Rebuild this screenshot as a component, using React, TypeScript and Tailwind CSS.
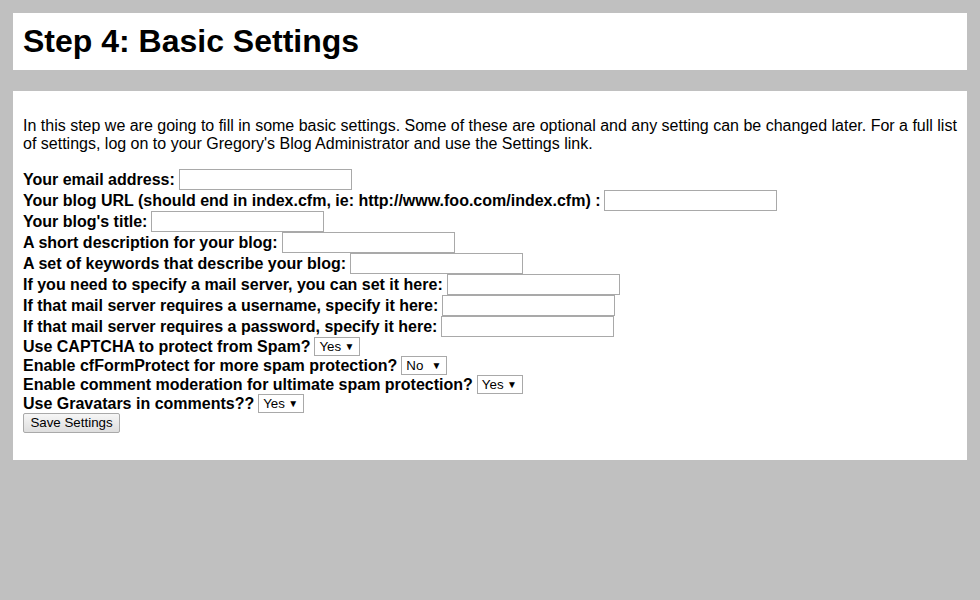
import React from "react";

const textRows = [
  "Your email address:",
  "Your blog URL (should end in index.cfm, ie: http://www.foo.com/index.cfm) :",
  "Your blog's title:",
  "A short description for your blog:",
  "A set of keywords that describe your blog:",
  "If you need to specify a mail server, you can set it here:",
  "If that mail server requires a username, specify it here:",
  "If that mail server requires a password, specify it here:",
];

const selectRows = [
  { label: "Use CAPTCHA to protect from Spam?", value: "Yes" },
  { label: "Enable cfFormProtect for more spam protection?", value: "No" },
  { label: "Enable comment moderation for ultimate spam protection?", value: "Yes" },
  { label: "Use Gravatars in comments??", value: "Yes" },
];

function FakeSelect({ value }: { value: string }) {
  return (
    <div className="flex h-[19px] w-[46px] items-center justify-between border border-[#a9a9a9] bg-white pl-[4px] pr-[5px] text-[13.33px] font-normal leading-none text-black">
      <span>{value}</span>
      <span className="text-[10px]">▼</span>
    </div>
  );
}

export default function App() {
  return (
    <div className="min-h-[600px] bg-[#c0c0c0] p-[13px] font-['Liberation_Sans',Arial,sans-serif] text-black">
      <div className="bg-white p-[10px]">
        <h1 className="text-[32px] font-bold leading-[37px]">Step 4: Basic Settings</h1>
      </div>

      <div className="mt-[21px] bg-white px-[10px] pt-[26px] pb-[27px]">
        <p className="text-[16px] leading-[18px]">
          In this step we are going to fill in some basic settings. Some of these are optional and any setting can be changed later. For a full list of settings, log on to your Gregory's Blog Administrator and use the Settings link.
        </p>

        <form className="mt-[16px] flex flex-col text-[16px] font-bold leading-[18px]">
          {textRows.map((label) => (
            <div key={label} className="flex h-[21px] items-center gap-[4px]">
              <span>{label}</span>
              <input
                type="text"
                className="h-[21px] w-[173px] border border-[#a9a9a9] bg-white px-1 text-[13px] font-normal outline-none"
              />
            </div>
          ))}

          {selectRows.map((row) => (
            <div key={row.label} className="flex h-[19px] items-center gap-[4px]">
              <span>{row.label}</span>
              <FakeSelect value={row.value} />
            </div>
          ))}

          <div className="flex h-[20px] items-center">
            <button
              type="button"
              className="h-[20px] w-[97px] rounded-[2px] border border-[#a9a9a9] bg-gradient-to-b from-[#f6f6f6] to-[#dedede] text-[13.33px] font-normal leading-none text-black"
            >
              Save Settings
            </button>
          </div>
        </form>
      </div>
    </div>
  );
}
